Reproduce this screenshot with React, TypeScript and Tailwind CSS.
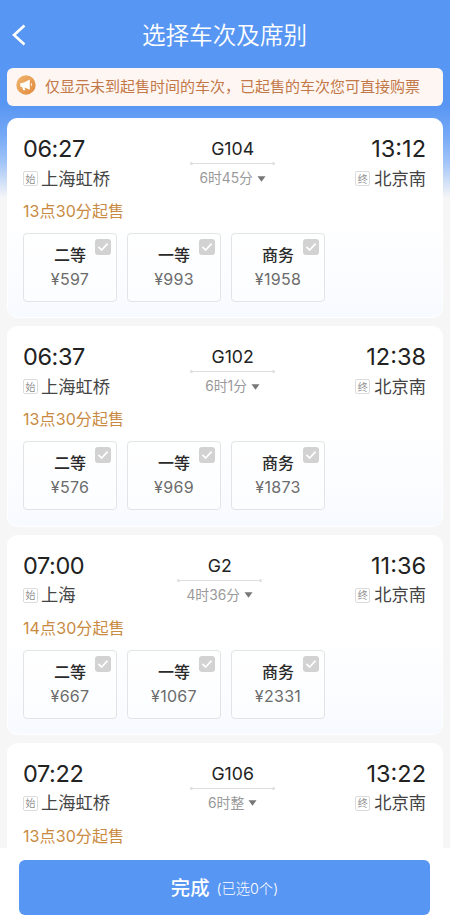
import { useState } from "react";

type Seat = { name: string; price: number };

type Train = {
  code: string;
  depart: string;
  arrive: string;
  from: string;
  to: string;
  duration: string;
  saleTime: string;
  seats: Seat[];
};

const trains: Train[] = [
  {
    code: "G104",
    depart: "06:27",
    arrive: "13:12",
    from: "上海虹桥",
    to: "北京南",
    duration: "6时45分",
    saleTime: "13点30分起售",
    seats: [
      { name: "二等", price: 597 },
      { name: "一等", price: 993 },
      { name: "商务", price: 1958 },
    ],
  },
  {
    code: "G102",
    depart: "06:37",
    arrive: "12:38",
    from: "上海虹桥",
    to: "北京南",
    duration: "6时1分",
    saleTime: "13点30分起售",
    seats: [
      { name: "二等", price: 576 },
      { name: "一等", price: 969 },
      { name: "商务", price: 1873 },
    ],
  },
  {
    code: "G2",
    depart: "07:00",
    arrive: "11:36",
    from: "上海",
    to: "北京南",
    duration: "4时36分",
    saleTime: "14点30分起售",
    seats: [
      { name: "二等", price: 667 },
      { name: "一等", price: 1067 },
      { name: "商务", price: 2331 },
    ],
  },
  {
    code: "G106",
    depart: "07:22",
    arrive: "13:22",
    from: "上海虹桥",
    to: "北京南",
    duration: "6时整",
    saleTime: "13点30分起售",
    seats: [],
  },
];

function StationTag({ label }: { label: string }) {
  return (
    <span className="flex h-[15px] w-[15px] items-center justify-center rounded-[2px] border border-[#dcdcdc] text-[10px] leading-none text-[#8f8f8f]">
      {label}
    </span>
  );
}

function SeatOption({
  seat,
  selected,
  onToggle,
}: {
  seat: Seat;
  selected: boolean;
  onToggle: () => void;
}) {
  return (
    <button
      type="button"
      onClick={onToggle}
      className="relative flex h-[69px] w-[94px] flex-col items-center rounded-[4px] border border-[#e3e4e6] bg-white/50 pt-[9px]"
    >
      <span className="text-[16px] font-medium leading-6 text-[#2a2a2a]">
        {seat.name}
      </span>
      <span className="text-[16px] leading-6 tracking-[0.3px] text-[#6c6c6c]">
        ¥{seat.price}
      </span>
      <svg
        viewBox="0 0 16 16"
        className={
          selected
            ? "absolute right-[5px] top-[5px] h-4 w-4 text-[#5896f3]"
            : "absolute right-[5px] top-[5px] h-4 w-4 text-[#d2d2d2]"
        }
      >
        <rect width="16" height="16" rx="3" fill="currentColor" />
        <path
          d="M3.4 7.8 6.6 11l6-6.4"
          fill="none"
          stroke="#fff"
          strokeWidth="1.7"
        />
      </svg>
    </button>
  );
}

function TrainCard({
  train,
  selected,
  onToggle,
}: {
  train: Train;
  selected: string[];
  onToggle: (key: string) => void;
}) {
  return (
    <div className="h-[200.3px] shrink-0 rounded-[10px] border border-white bg-gradient-to-b from-white from-50% to-[#f7faff] pl-[15px] pr-4 pt-4">
      <div className="flex justify-between">
        {/* Departure */}
        <div>
          <div className="text-[23.5px] leading-7 tracking-[-0.4px] text-[#222]">
            {train.depart}
          </div>
          <div className="mt-[1.5px] flex h-7 items-center gap-[3px] text-[17.3px] text-[#444]">
            <StationTag label="始" />
            {train.from}
          </div>
        </div>

        {/* Train number */}
        <div className="flex w-[85px] flex-col items-center">
          <div className="h-[27px] text-[17.7px] leading-7 text-[#222]">
            {train.code}
          </div>
          <div className="flex w-full items-center">
            <span className="h-[3px] w-[3px] rounded-full bg-[#dedede]" />
            <span className="h-px flex-1 bg-[#dedede]" />
            <span className="h-[3px] w-[3px] rounded-full bg-[#dedede]" />
          </div>
          <div className="flex h-[27px] items-center gap-1 text-[13.8px] text-[#999]">
            {train.duration}
            <svg viewBox="0 0 9 6" className="h-[6px] w-[9px]">
              <path d="M.5.3h8L4.5 5.8Z" fill="#777" />
            </svg>
          </div>
        </div>

        {/* Arrival */}
        <div className="flex flex-col items-end">
          <div className="text-[23.5px] leading-7 text-[#222]">
            {train.arrive}
          </div>
          <div className="mt-[1.5px] flex h-7 items-center gap-1 text-[17.3px] text-[#444]">
            <StationTag label="终" />
            {train.to}
          </div>
        </div>
      </div>

      <div className="mt-[6.5px] text-[16px] leading-6 tracking-[0.1px] text-[#c98a42]">
        {train.saleTime}
      </div>

      <div className="mt-[10px] flex gap-[10px]">
        {train.seats.map((seat) => {
          const key = `${train.code}-${seat.name}`;
          return (
            <SeatOption
              key={key}
              seat={seat}
              selected={selected.includes(key)}
              onToggle={() => onToggle(key)}
            />
          );
        })}
      </div>
    </div>
  );
}

export default function App() {
  const [selected, setSelected] = useState<string[]>([]);

  const toggle = (key: string) => {
    setSelected((prev) =>
      prev.includes(key) ? prev.filter((k) => k !== key) : [...prev, key]
    );
  };

  return (
    <div className="flex h-[924px] w-[450px] flex-col overflow-hidden bg-[#f6f6f7] bg-[linear-gradient(to_bottom,#5896f3_0,#5896f3_104px,#74a8f6_135px,#9dc2f8_160px,#f6f6f7_198px)] font-[Inter,'Noto_Sans_CJK_SC',sans-serif]">
      {/* Header */}
      <header className="grid h-[68px] shrink-0 grid-cols-[60px_1fr_60px] items-center">
        <button type="button" className="pl-[11px] pt-px">
          <svg viewBox="0 0 16 22" className="h-[22px] w-4">
            <path
              d="M13.5 1.5 3 11l10.5 9.5"
              fill="none"
              stroke="#fff"
              strokeWidth="2.6"
            />
          </svg>
        </button>
        <h1 className="pr-px pt-[3px] text-center text-[23.6px] font-[350] leading-8 text-white">
          选择车次及席别
        </h1>
      </header>

      {/* Notice */}
      <div className="mx-[7px] flex h-[38px] shrink-0 items-center rounded-[6px] bg-[#fef6f2] pl-[9px]">
        <svg viewBox="0 0 20 20" className="-mt-1 h-5 w-5 shrink-0">
          <defs>
            <linearGradient id="horn" x1="0" y1="0" x2="1" y2="1">
              <stop offset="0" stopColor="#efb56f" />
              <stop offset="1" stopColor="#e18a3c" />
            </linearGradient>
          </defs>
          <circle cx="10" cy="10" r="9.7" fill="url(#horn)" />
          <path
            d="M4.3 8.3 8 7.4l5.8-3v10.4l-5.2-2.2.7 2.6H7.2l-.9-3-2-.6Z"
            fill="#fff"
          />
          <path d="M15 7.8a2.3 2.3 0 0 1 0 3.6Z" fill="#fff" />
        </svg>
        <p className="ml-[9px] whitespace-nowrap text-[15px] leading-6 text-[#c27848]">
          仅显示未到起售时间的车次，已起售的车次您可直接购票
        </p>
      </div>

      {/* Train list */}
      <main className="mx-[7px] mt-3 flex min-h-0 flex-1 flex-col gap-2 overflow-hidden">
        {trains.map((train) => (
          <TrainCard
            key={train.code}
            train={train}
            selected={selected}
            onToggle={toggle}
          />
        ))}
      </main>

      {/* Footer */}
      <footer className="h-[76px] shrink-0 bg-white pl-[19px] pr-5 pt-3">
        <button
          type="button"
          className="flex h-[55px] w-full items-center justify-center gap-[7px] rounded-[6px] bg-[#5896f3] pt-px text-white"
        >
          <span className="text-[19.3px] font-medium">完成</span>
          <span className="pt-px text-[14.3px] font-light">
            (已选{selected.length}个)
          </span>
        </button>
      </footer>
    </div>
  );
}
